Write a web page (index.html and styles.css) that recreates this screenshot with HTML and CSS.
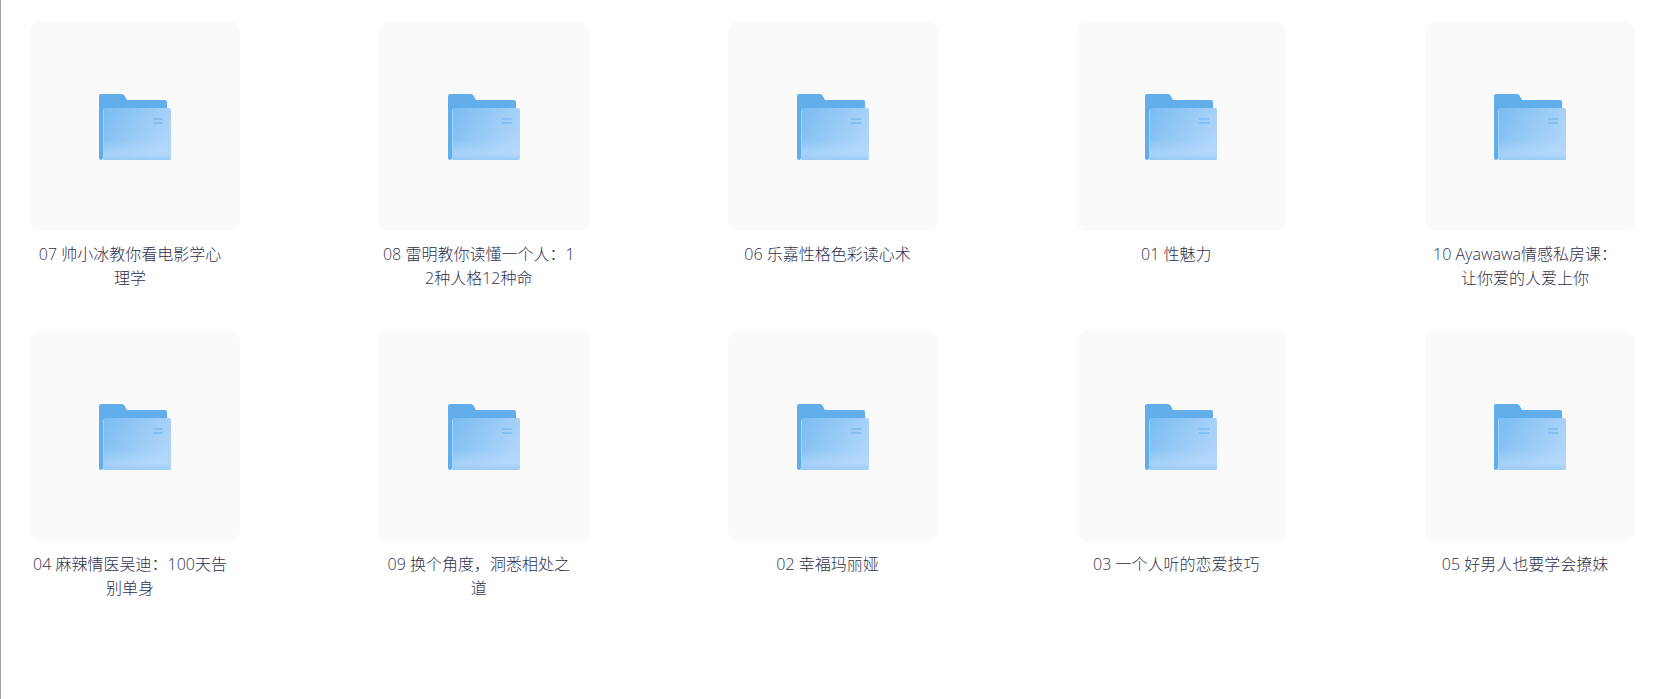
FILE: index.html
```
<!DOCTYPE html>
<html lang="zh-CN">
<head>
<meta charset="utf-8">
<meta name="viewport" content="width=device-width, initial-scale=1">
<title>文件</title>
<link rel="stylesheet" href="styles.css">
</head>
<body>
<svg class="defs" width="0" height="0" aria-hidden="true">
  <defs>
    <linearGradient id="front" x1="0" y1="0.1" x2="0.95" y2="0.5">
      <stop offset="0" stop-color="#7bbdf1"/>
      <stop offset="1" stop-color="#add4fa"/>
    </linearGradient>
    <linearGradient id="shine" x1="0" y1="0" x2="0" y2="1">
      <stop offset="0.6" stop-color="#b8dbfc" stop-opacity="0"/>
      <stop offset="0.88" stop-color="#b8dbfc" stop-opacity="0.6"/>
      <stop offset="0.94" stop-color="#a8d0f8" stop-opacity="0.7"/>
      <stop offset="1" stop-color="#98caf7"/>
    </linearGradient>
    <symbol id="folder" viewBox="0 0 72 72">
      <path fill="#62aeeb" d="M2 4H23Q24.500 4 25.500 5.500L28 10H66Q68 10 68 12V66H4V68Q4 70 2 70Q0 70 0 68V6Q0 4 2 4Z"/>
      <rect x="4" y="18" width="68" height="52" rx="2" fill="url(#front)"/>
      <rect x="4" y="18" width="68" height="52" rx="2" fill="url(#shine)"/>
      <path d="M4.500 20V68" stroke="#a3d1f8" fill="none"/>
      <path d="M54 29H64M54 33H64" stroke="#86c0f2" stroke-width="2" fill="none"/>
    </symbol>
  </defs>
</svg>
<main class="files">
  <figure class="file"><div class="tile"><svg class="icon" aria-hidden="true"><use href="#folder"/></svg></div><figcaption class="name">07 帅小冰教你看电影学心理学</figcaption></figure>
  <figure class="file"><div class="tile"><svg class="icon" aria-hidden="true"><use href="#folder"/></svg></div><figcaption class="name">08 雷明教你读懂一个人：12种人格12种命</figcaption></figure>
  <figure class="file"><div class="tile"><svg class="icon" aria-hidden="true"><use href="#folder"/></svg></div><figcaption class="name">06 乐嘉性格色彩读心术</figcaption></figure>
  <figure class="file"><div class="tile"><svg class="icon" aria-hidden="true"><use href="#folder"/></svg></div><figcaption class="name">01 性魅力</figcaption></figure>
  <figure class="file"><div class="tile"><svg class="icon" aria-hidden="true"><use href="#folder"/></svg></div><figcaption class="name">10 Ayawawa情感私房课：让你爱的人爱上你</figcaption></figure>
  <figure class="file"><div class="tile"><svg class="icon" aria-hidden="true"><use href="#folder"/></svg></div><figcaption class="name">04 麻辣情医吴迪：100天告别单身</figcaption></figure>
  <figure class="file"><div class="tile"><svg class="icon" aria-hidden="true"><use href="#folder"/></svg></div><figcaption class="name">09 换个角度，洞悉相处之道</figcaption></figure>
  <figure class="file"><div class="tile"><svg class="icon" aria-hidden="true"><use href="#folder"/></svg></div><figcaption class="name">02 幸福玛丽娅</figcaption></figure>
  <figure class="file"><div class="tile"><svg class="icon" aria-hidden="true"><use href="#folder"/></svg></div><figcaption class="name">03 一个人听的恋爱技巧</figcaption></figure>
  <figure class="file"><div class="tile"><svg class="icon" aria-hidden="true"><use href="#folder"/></svg></div><figcaption class="name">05 好男人也要学会撩妹</figcaption></figure>
</main>
</body>
</html>
```
FILE: styles.css
```
* {
  box-sizing: border-box;
}

body {
  margin: 0;
  background: #fff;
  color: #30304f;
  font: 300 16px/24px "Open Sans", "Noto Sans CJK SC", sans-serif;
}

.defs {
  position: absolute;
}

.files {
  display: grid;
  grid-template-columns: repeat(5, 210px);
  justify-content: space-between;
  align-content: start;
  row-gap: 41px;
  min-height: 100vh;
  padding: 21px 21px 21px 29px;
  border-left: 1px solid #a3a3a9;
}

.file {
  margin: 0;
}

.tile {
  display: flex;
  align-items: center;
  justify-content: center;
  height: 210px;
  border-radius: 10px;
  background: #fafafa;
}

.icon {
  width: 72px;
  height: 72px;
}

.name {
  margin: 11px 12px 0 2px;
  text-align: center;
  word-break: break-all;
}
```
